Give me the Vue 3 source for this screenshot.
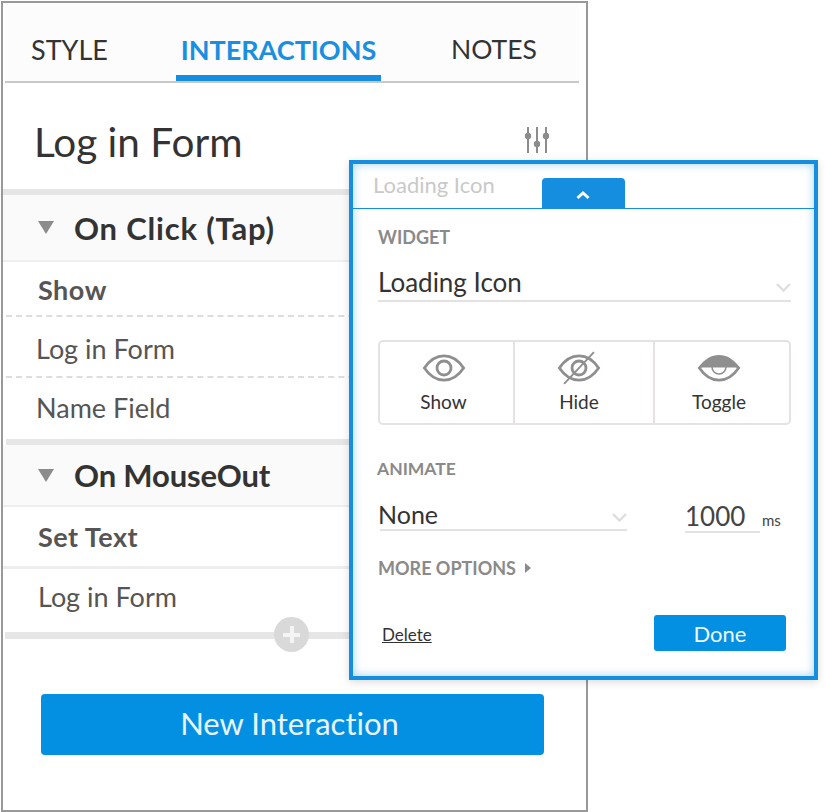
<template>
  <div class="page">
    <div class="panel">
      <div class="tabs">
        <div v-for="tab in tabs" :key="tab.name" class="tab" :class="[tab.cls, { active: tab.active }]">{{ tab.name }}</div>
      </div>

      <div class="title-row">
        <h1 class="title">Log in Form</h1>
        <svg class="sliders" width="26" height="28" viewBox="0 0 26 28" fill="none" stroke="#8c8c8c" stroke-width="2">
          <path d="M4 1v26M13 1v26M22 1v26" />
          <circle cx="4" cy="10" r="3.2" fill="#8c8c8c" stroke="none" />
          <circle cx="13" cy="18" r="3.2" fill="#8c8c8c" stroke="none" />
          <circle cx="22" cy="10" r="3.2" fill="#8c8c8c" stroke="none" />
        </svg>
      </div>

      <div class="divider first"></div>
      <div class="event ev-click"><span class="caret"></span>On Click (Tap)</div>
      <div class="row action r-show">Show</div>
      <div class="row target r-form">Log in Form</div>
      <div class="row target r-name">Name Field</div>

      <div class="divider"></div>
      <div class="event ev-out"><span class="caret"></span>On MouseOut</div>
      <div class="row action r-set">Set Text</div>
      <div class="row target r-last">Log in Form</div>

      <div class="divider add-line">
        <span class="add"><span class="plus"></span></span>
      </div>

      <div class="new-wrap">
        <button class="new-btn">New Interaction</button>
      </div>
    </div>

    <div class="popover">
      <div class="pop-head">
        <span class="pop-name">Loading Icon</span>
        <span class="collapse">
          <svg width="16" height="10" viewBox="0 0 16 10" fill="none" stroke="#fff" stroke-width="3"><path d="M2.5 8 8 3l5.5 5" /></svg>
        </span>
      </div>

      <div class="pop-body">
        <div class="label widget-label">WIDGET</div>
        <div class="select widget-select">
          <span>Loading Icon</span>
          <svg class="chev" width="15" height="9" viewBox="0 0 15 9" fill="none" stroke="#dedede" stroke-width="2.4"><path d="M1 1l6.5 6.5L14 1" /></svg>
        </div>

        <div class="segments">
          <div class="seg seg-show">
            <svg width="44" height="28" viewBox="0 0 46 30" fill="none" stroke="#8f8f8f" stroke-width="3">
              <path d="M2 15C8 6 15 2 23 2s15 4 21 13c-6 9-13 13-21 13S8 24 2 15Z" />
              <circle cx="23" cy="15" r="7.5" />
            </svg>
            <span>Show</span>
          </div>
          <div class="seg seg-hide">
            <svg width="44" height="28" viewBox="0 0 46 30" fill="none" stroke="#8f8f8f" stroke-width="3" overflow="visible">
              <path d="M2 15C8 6 15 2 23 2s15 4 21 13c-6 9-13 13-21 13S8 24 2 15Z" />
              <circle cx="23" cy="15" r="7.5" />
              <path d="M39 -2 7 32" stroke-width="2" />
            </svg>
            <span>Hide</span>
          </div>
          <div class="seg seg-toggle">
            <svg width="44" height="28" viewBox="0 0 46 30" fill="none" stroke="#8f8f8f" stroke-width="3">
              <path d="M2 13C8 5 15 1 23 1s15 4 21 12Z" fill="#8f8f8f" stroke="none" />
              <path d="M2 15c6 9 13 13 21 13s15-4 21-13L42 13H4Z" />
              <path d="M15.5 14a7.5 7.5 0 0 0 15 0" stroke-width="1.6" />
            </svg>
            <span>Toggle</span>
          </div>
        </div>

        <div class="label animate-label">ANIMATE</div>
        <div class="animate-row">
          <div class="select anim-select">
            <span>None</span>
            <svg class="chev" width="15" height="9" viewBox="0 0 15 9" fill="none" stroke="#dedede" stroke-width="2.4"><path d="M1 1l6.5 6.5L14 1" /></svg>
          </div>
          <div class="duration">1000</div>
          <span class="ms">ms</span>
        </div>

        <div class="label more">MORE OPTIONS<span class="more-caret"></span></div>

        <div class="pop-foot">
          <a class="delete">Delete</a>
          <button class="done">Done</button>
        </div>
      </div>
    </div>
  </div>
</template>

<script setup>
const tabs = [
  { name: 'STYLE', cls: 'tab-style' },
  { name: 'INTERACTIONS', cls: 'tab-inter', active: true },
  { name: 'NOTES', cls: 'tab-notes' }
]
</script>

<style>
html, body {
  margin: 0;
  background: #fff;
}
</style>

<style scoped>
.page {
  position: relative;
  width: 826px;
  height: 812px;
  overflow: hidden;
  font-family: "Lato", "Noto Sans", sans-serif;
  font-variant-ligatures: none;
  color: #333;
}

.panel {
  box-sizing: border-box;
  width: 587px;
  height: 811px;
  margin: 1px 0 0 1px;
  border: 2px solid #999;
}

.tabs {
  display: flex;
  height: 78px;
  margin: 0 7px 0 2px;
  background: #fcfcfc;
  border-bottom: 2px solid #c8c8c8;
}
.tab {
  display: flex;
  align-items: center;
  box-sizing: border-box;
  height: 78px;
  padding-top: 14px;
  font-size: 27px;
  color: #333;
}
.tab-style { width: 171px; padding-left: 26px; }
.tab-inter {
  width: 205px;
  justify-content: center;
  font-size: 27px;
  font-weight: 700;
  color: #1a8fe0;
  border-bottom: 6px solid #158ee0;
  padding-top: 27px;
  padding-bottom: 6px;
}
.tab-notes { flex: 1; padding-left: 70px; font-size: 26.5px; }

.title-row {
  display: flex;
  align-items: center;
  justify-content: space-between;
  height: 106px;
  padding: 0 36px 0 31px;
}
.title {
  margin: 0;
  padding-top: 11px;
  font-size: 40.5px;
  font-weight: 400;
  color: #333;
}
.sliders { margin-top: 8px; }

.divider {
  height: 6px;
  background: #e6e6e6;
  margin-left: 3px;
}
.divider.first { margin-left: 0; }

.event {
  display: flex;
  align-items: center;
  height: 65px;
  padding-left: 35px;
  font-size: 31px;
  font-weight: 700;
  color: #333;
  background: #fafafa;
  border-bottom: 2px solid #eee;
}
.ev-click { letter-spacing: 0.8px; }
.ev-out { height: 60px; letter-spacing: -0.15px; }
.caret {
  width: 0;
  height: 0;
  margin-right: 20px;
  border-left: 8px solid transparent;
  border-right: 8px solid transparent;
  border-top: 13px solid #8c8c8c;
}

.row {
  display: flex;
  align-items: center;
  box-sizing: border-box;
  font-size: 27px;
  color: #555;
}
.action {
  font-weight: 700;
  letter-spacing: 0.5px;
  padding-left: 35px;
}
.target { padding-left: 33px; }
.r-show { height: 55px; border-bottom: 2px dashed #ddd; margin-left: 3px; padding: 1px 0 0 32px; }
.r-form { height: 61px; border-bottom: 2px dashed #ddd; margin-left: 3px; padding: 4px 0 0 30px; }
.r-name { height: 61px; padding-bottom: 2px; }
.r-set { height: 62px; border-bottom: 3px solid #eee; }
.r-last { height: 63px; padding: 0 0 8px 35px; }

.add-line {
  position: relative;
  height: 7px;
  margin-left: 2px;
}
.add {
  position: absolute;
  left: 269px;
  top: -15px;
  width: 35px;
  height: 35px;
  border-radius: 50%;
  background: #d9d9d9;
}
.plus::before,
.plus::after {
  content: "";
  position: absolute;
  background: #f4f4f4;
}
.plus::before { left: 9px; top: 16px; width: 17px; height: 4px; }
.plus::after { left: 16px; top: 9px; width: 4px; height: 17px; }

.new-wrap {
  padding: 55px 42px 0 38px;
}
.new-btn {
  display: block;
  width: 100%;
  height: 61px;
  padding: 0 6px 4px 0;
  border: 0;
  border-radius: 4px;
  background: #0390e2;
  color: #e8f5fd;
  font: 400 31px "Lato", sans-serif;
  font-variant-ligatures: none;
}

.popover {
  position: absolute;
  left: 349px;
  top: 160px;
  box-sizing: border-box;
  width: 469px;
  height: 520px;
  background: #fff;
  border: 4px solid #158ee0;
  box-shadow: inset 0 0 10px rgba(21, 142, 224, 0.4), 0 2px 8px rgba(0, 0, 0, 0.15);
}

.pop-head {
  position: relative;
  height: 45px;
  box-sizing: border-box;
  border-bottom: 1px solid #158ee0;
  margin-right: -4px;
}
.pop-name {
  position: absolute;
  left: 20px;
  top: 7px;
  font-size: 22px;
  color: #c9c9c9;
}
.collapse {
  position: absolute;
  left: 189px;
  top: 14px;
  display: flex;
  align-items: center;
  justify-content: center;
  width: 83px;
  height: 30px;
  padding: 4px 2px 0 0;
  box-sizing: border-box;
  border-radius: 4px 4px 0 0;
  background: #158ee0;
}

.pop-body {
  padding: 0 23px 0 25px;
}
.label {
  font-size: 18px;
  font-weight: 700;
  color: #8a8a8a;
}
.widget-label { padding-top: 18px; line-height: 20px; }
.select {
  position: relative;
  display: flex;
  align-items: center;
  border-bottom: 2px solid #e2e2e2;
  color: #333;
}
.widget-select {
  margin-top: 18px;
  height: 37px;
  padding-bottom: 2px;
  box-sizing: border-box;
  font-size: 26px;
}
.chev {
  position: absolute;
  right: 0;
  top: 18px;
}
.segments {
  display: flex;
  height: 85px;
  box-sizing: border-box;
  margin-top: 38px;
  border: 2px solid #e6e2e2;
  border-radius: 5px;
}
.seg {
  display: flex;
  flex-direction: column;
  align-items: center;
  box-sizing: border-box;
  padding-top: 12px;
  font-size: 19px;
  color: #333;
}
.seg span { margin-top: 10px; line-height: 20px; }
.seg-show { width: 135px; border-right: 2px solid #e6e2e2; padding-right: 6px; }
.seg-hide { width: 140px; border-right: 2px solid #e6e2e2; padding-right: 10px; }
.seg-toggle { flex: 1; padding-right: 6px; }

.animate-label {
  margin-top: 34px;
  margin-left: -1px;
  font-size: 17.5px;
  line-height: 20px;
}
.animate-row {
  display: flex;
  align-items: flex-start;
  margin-top: 22px;
}
.anim-select {
  width: 247px;
  height: 30px;
  padding-bottom: 2px;
  box-sizing: border-box;
  margin-left: 2px;
  text-indent: -2px;
  font-size: 25px;
}
.anim-select .chev { top: 12px; }
.duration {
  width: 75px;
  height: 32px;
  box-sizing: border-box;
  margin-left: 58px;
  border-bottom: 2px solid #e2e2e2;
  font-size: 26px;
  line-height: 30px;
  color: #444;
}
.ms {
  margin: 10px 0 0 2px;
  font-size: 15px;
  line-height: 18px;
  color: #444;
}
.more {
  display: flex;
  align-items: center;
  margin-top: 24px;
  line-height: 22px;
}
.more-caret {
  width: 0;
  height: 0;
  margin-left: 9px;
  border-top: 5px solid transparent;
  border-bottom: 5px solid transparent;
  border-left: 6px solid #8a8a8a;
}
.pop-foot {
  display: flex;
  align-items: center;
  justify-content: space-between;
  margin: 36px 5px 0 4px;
}
.delete {
  padding-top: 2px;
  font-size: 17px;
  color: #333;
  text-decoration: underline;
}
.done {
  width: 132px;
  height: 36px;
  border: 0;
  border-radius: 3px;
  background: #0390e2;
  color: #eef8fe;
  font: 400 22px "Lato", sans-serif;
}
</style>
